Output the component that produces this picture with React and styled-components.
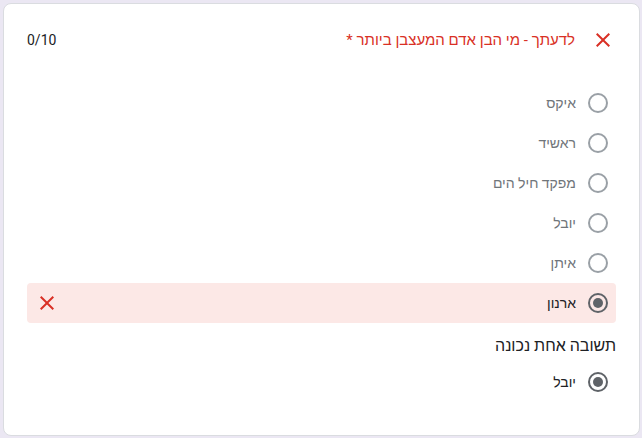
import React from 'react';
import styled, { createGlobalStyle } from 'styled-components';

const GlobalStyle = createGlobalStyle`
    html, body {
        margin: 0;
        padding: 0;
        background: #ebe7f3;
    }
    body {
        font-family: Roboto, "Liberation Sans", Arial, sans-serif;
    }
`;

const options = [
    { label: 'איקס' },
    { label: 'ראשיד' },
    { label: 'מפקד חיל הים' },
    { label: 'יובל' },
    { label: 'איתן' },
    { label: 'ארנון', checked: true, wrong: true },
];

const CloseIcon = ({ size = 24 }) => (
    <svg width={size} height={size} viewBox="0 0 24 24" aria-hidden="true">
        <path
            fill="#d93025"
            d="M19 6.41 17.59 5 12 10.59 6.41 5 5 6.41 10.59 12 5 17.59 6.41 19 12 13.41 17.59 19 19 17.59 13.41 12z"
        />
    </svg>
);

const App = () => {
    return (
        <>
            <GlobalStyle />
            <Page>
                <Card dir="rtl">
                    <Header>
                        <HeaderIcon>
                            <CloseIcon />
                        </HeaderIcon>
                        <Title>לדעתך - מי הבן אדם המעצבן ביותר *</Title>
                        <Score dir="ltr">0/10</Score>
                    </Header>

                    <OptionList>
                        {options.map((opt) => (
                            <OptionRow key={opt.label} wrong={opt.wrong}>
                                <Radio checked={opt.checked} />
                                <OptionLabel checked={opt.checked}>{opt.label}</OptionLabel>
                                {opt.wrong ? (
                                    <RowIcon>
                                        <CloseIcon />
                                    </RowIcon>
                                ) : null}
                            </OptionRow>
                        ))}
                    </OptionList>

                    <CorrectTitle>תשובה אחת נכונה</CorrectTitle>
                    <OptionRow>
                        <Radio checked />
                        <OptionLabel checked>יובל</OptionLabel>
                    </OptionRow>
                </Card>
            </Page>
        </>
    );
};

export default App;

const Page = styled.div`
    padding: 3px 2px 2px 3px;
    height: 438px;
    box-sizing: border-box;
`;

const Card = styled.div`
    box-sizing: border-box;
    height: 433px;
    background: #fff;
    border: 1px solid #dadce0;
    border-radius: 8px;
    padding: 24px 23px 0;
`;

const Header = styled.div`
    display: flex;
    align-items: center;
    height: 24px;
    margin-bottom: 31px;
`;

const HeaderIcon = styled.span`
    display: flex;
    flex-shrink: 0;
    margin-right: 1px;
    margin-left: -1px;
`;

const Title = styled.div`
    color: #d93025;
    font-size: 15px;
    margin-right: 17px;
    white-space: nowrap;
`;

const Score = styled.div`
    margin-right: auto;
    color: #202124;
    font-size: 14px;
`;

const OptionList = styled.div`
    display: flex;
    flex-direction: column;
`;

const OptionRow = styled.div`
    display: flex;
    align-items: center;
    height: 40px;
    padding: 0 8px;
    border-radius: 4px;
    background: ${props => props.wrong ? '#fce8e6' : 'transparent'};
`;

const Radio = styled.span`
    position: relative;
    box-sizing: border-box;
    flex-shrink: 0;
    width: 20px;
    height: 20px;
    border-radius: 50%;
    border: 2px solid ${props => props.checked ? '#5f6368' : '#9aa0a6'};

    ${props => props.checked ? `
        &:after {
            content: '';
            position: absolute;
            top: 3px;
            left: 3px;
            width: 10px;
            height: 10px;
            border-radius: 50%;
            background: #5f6368;
        }
    ` : null}
`;

const OptionLabel = styled.span`
    margin-right: 12px;
    font-size: 14px;
    color: ${props => props.checked ? '#202124' : '#70757a'};
`;

const RowIcon = styled.span`
    display: flex;
    margin-right: auto;
`;

const CorrectTitle = styled.div`
    margin: 11px 0 4px;
    height: 24px;
    line-height: 24px;
    font-size: 16px;
    color: #202124;
`;
